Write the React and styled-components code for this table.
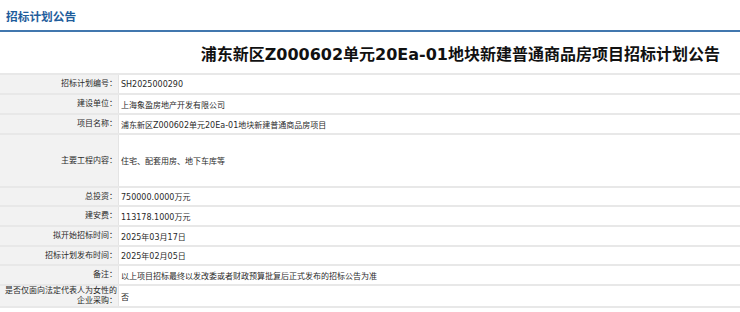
import React from 'react';
import styled, { createGlobalStyle } from 'styled-components';

const GlobalStyle = createGlobalStyle`
  body {
    margin: 0;
    background: #fff;
    font-family: "DejaVu Sans", "Noto Sans CJK SC", sans-serif;
  }
`;

const rows = [
  { label: '招标计划编号：', value: 'SH2025000290', h: 20 },
  { label: '建设单位：', value: '上海象盈房地产开发有限公司', h: 20 },
  { label: '项目名称：', value: '浦东新区Z000602单元20Ea-01地块新建普通商品房项目', h: 20 },
  { label: '主要工程内容：', value: '住宅、配套用房、地下车库等', h: 53 },
  { label: '总投资：', value: '750000.0000万元', h: 19 },
  { label: '建安费：', value: '113178.1000万元', h: 20 },
  { label: '拟开始招标时间：', value: '2025年03月17日', h: 20 },
  { label: '招标计划发布时间：', value: '2025年02月05日', h: 19 },
  { label: '备注：', value: '以上项目招标最终以发改委或者财政预算批复后正式发布的招标公告为准', h: 20 },
  { label: '是否仅面向法定代表人为女性的企业采购：', value: '否', h: 22 },
];

function App() {
  return (
    <>
      <GlobalStyle />
      <Page>
        <Header>
          <HeaderTitle>招标计划公告</HeaderTitle>
        </Header>
        <TitleBlock>
          <Title>浦东新区Z000602单元20Ea-01地块新建普通商品房项目招标计划公告</Title>
        </TitleBlock>
        <Table>
          {rows.map((r) => (
            <Row key={r.label} $h={r.h}>
              <Label>{r.label}</Label>
              <Value>{r.value}</Value>
            </Row>
          ))}
        </Table>
      </Page>
    </>
  );
}

const Page = styled.div`
  width: 740px;
`;

const Header = styled.div`
  height: 30px;
  display: flex;
  align-items: center;
  padding-left: 6px;
  border-bottom: 2px solid #4177ae;
`;

const HeaderTitle = styled.h2`
  margin: 0;
  font-size: 11.7px;
  font-weight: bold;
  color: #1f5d9c;
`;

const TitleBlock = styled.div`
  height: 41px;
  display: flex;
  align-items: center;
  justify-content: flex-end;
  padding-right: 20px;
`;

const Title = styled.h1`
  margin: 0;
  font-size: 16px;
  font-weight: bold;
  color: #111;
  white-space: nowrap;
`;

const Table = styled.div`
  border-bottom: 2px solid #e8e8e8;
`;

const Row = styled.div`
  display: grid;
  grid-template-columns: 119px 1fr;
  height: ${(p) => p.$h}px;
  border-top: 2px solid #e8e8e8;
  box-sizing: border-box;
  font-size: 8px;
  color: #2a2a2a;
`;

const Label = styled.div`
  background: #f2f2f2;
  border-right: 1px solid #e4e4e4;
  display: flex;
  align-items: center;
  justify-content: flex-end;
  text-align: right;
  padding-right: 1px;
  line-height: 10px;
`;

const Value = styled.div`
  display: flex;
  align-items: center;
  padding-left: 2px;
  white-space: nowrap;
`;

export default App;
